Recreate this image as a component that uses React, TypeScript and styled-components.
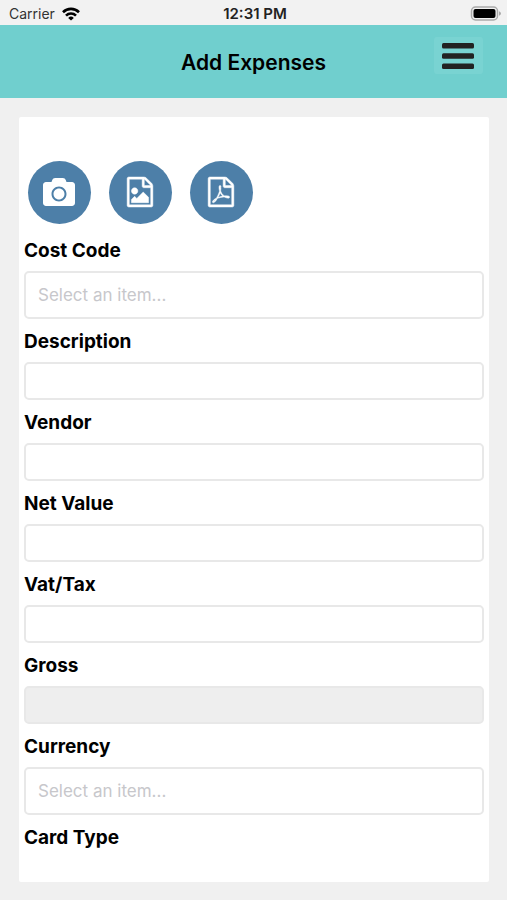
import React from "react";
import styled, { createGlobalStyle } from "styled-components";
import { FaCamera } from "react-icons/fa";

const GlobalStyle = createGlobalStyle`
  * { box-sizing: border-box; }
  body {
    margin: 0;
    background: #f0f0f0;
    color: #000;
    font-family: Inter, "Liberation Sans", sans-serif;
  }
`;

const StatusBar = styled.div`
  display: grid;
  grid-template-columns: 1fr auto 1fr;
  align-items: center;
  height: 25px;
  padding: 2px 6px 0 9px;
  background: #f2f2f2;
  color: #222;
  font-size: 14px;
`;

const Carrier = styled.div`
  display: flex;
  align-items: center;
  gap: 7px;
  color: #333;
`;

const Clock = styled.time`
  font-size: 15px;
  font-weight: 600;
`;

const Battery = styled.svg`
  justify-self: end;
`;

const Header = styled.header`
  display: grid;
  grid-template-columns: 1fr auto 1fr;
  align-items: start;
  height: 73px;
  padding: 12px 24px;
  background: #70cfce;
`;

const Title = styled.h1`
  grid-column: 2;
  margin: 0;
  font-size: 21px;
  line-height: 52px;
  font-weight: 600;
`;

const MenuButton = styled.button`
  display: flex;
  justify-content: center;
  align-items: center;
  justify-self: end;
  width: 49px;
  height: 37px;
  padding: 0 2px 0 0;
  border: 0;
  border-radius: 3px;
  background: #79d3d2;
`;

const Card = styled.main`
  margin: 19px 18px 18px 19px;
  padding: 44px 5px 24px;
  background: #fff;
  border-radius: 2px;
`;

const Actions = styled.div`
  display: flex;
  gap: 18px;
  padding: 0 4px 4px;
`;

const RoundButton = styled.button`
  display: flex;
  align-items: center;
  justify-content: center;
  width: 63px;
  height: 63px;
  padding: 0 2px 2px 0;
  border: 0;
  border-radius: 50%;
  background: #4d7fa8;
  color: #fff;
`;

const Label = styled.label`
  display: block;
  padding-top: 2px;
  font-size: 19px;
  line-height: 41px;
  font-weight: 700;
`;

const TextInput = styled.input`
  display: block;
  width: 100%;
  height: 38px;
  padding: 0 12px;
  border: 2px solid #e8e8e8;
  border-radius: 5px;
  background: #fff;
  font: inherit;
  font-size: 17px;

  &:disabled {
    background: #eee;
  }
`;

const Select = styled.select`
  display: block;
  appearance: none;
  width: 100%;
  height: 48px;
  padding: 0 12px;
  border: 2px solid #e8e8e8;
  border-radius: 5px;
  background: #fff;
  color: #c7c7cb;
  font: inherit;
  font-size: 17px;
`;

const FILE_FRAME =
  "M1468 380q28 28 48 76t20 88v1152q0 40-28 68t-68 28h-1344q-40 0-68-28t-28-68v-1600q0-40 28-68t68-28h896q40 0 88 20t76 48zm-444-244v376h376q-10-29-22-41l-313-313q-12-12-41-22zm384 1528v-1024h-416q-40 0-68-28t-28-68v-416h-768v1536h1280z";
const IMAGE_MARK =
  "m-128-448v320h-1024v-192l192-192 128 128 384-384zm-832-192q-80 0-136-56t-56-136 56-136 136-56 136 56 56 136-56 136-136 56z";
const PDF_MARK =
  "m-514-593q33 26 84 56 59-7 117-7 147 0 177 49 16 22 2 52 0 1-1 2l-2 2v1q-6 38-71 38-48 0-115-20t-130-53q-221 24-392 83-153 262-242 262-15 0-28-7l-24-12q-1-1-6-5-10-10-6-36 9-40 56-91.5t132-96.5q14-9 23 6 2 2 2 4 52-85 107-197 68-136 104-262-24-82-30.5-159.5t6.5-127.5q11-40 42-40h22q23 0 35 15 18 21 9 68-2 6-4 8 1 3 1 8v30q-2 123-14 192 55 164 146 238zm-576 411q52-24 137-158-51 40-87.5 84t-49.5 74zm398-920q-15 42-2 132 1-7 7-44 0-3 7-43 1-4 4-8-1-1-1-2t-1-2-1-2q-1-22-13-36 0 1-1 2v2zm-124 661q135-54 284-81-2-1-13-9.5t-16-13.5q-76-67-127-176-27 86-83 197-30 56-45 83zm646-16q-24-24-140-24 76 28 124 28 14 0 18-1 0-1-2-3z";

function FileIcon({ mark }: { mark: string }) {
  return (
    <svg
      width="26"
      height="30"
      viewBox="0 0 1536 1792"
      fill="currentColor"
      stroke="currentColor"
      strokeWidth="28"
      overflow="visible"
      aria-hidden="true"
    >
      <path d={FILE_FRAME + mark} />
    </svg>
  );
}

type FieldSpec = { id: string; label: string; kind: "text" | "select" | "disabled" };

const fields: FieldSpec[] = [
  { id: "cost-code", label: "Cost Code", kind: "select" },
  { id: "description", label: "Description", kind: "text" },
  { id: "vendor", label: "Vendor", kind: "text" },
  { id: "net-value", label: "Net Value", kind: "text" },
  { id: "vat", label: "Vat/Tax", kind: "text" },
  { id: "gross", label: "Gross", kind: "disabled" },
  { id: "currency", label: "Currency", kind: "select" },
];

function Field({ id, label, kind }: FieldSpec) {
  return (
    <div>
      <Label htmlFor={id}>{label}</Label>
      {kind === "select" ? (
        <Select id={id} defaultValue="">
          <option value="">Select an item...</option>
        </Select>
      ) : (
        <TextInput id={id} type="text" disabled={kind === "disabled"} />
      )}
    </div>
  );
}

export default function App() {
  return (
    <>
      <GlobalStyle />
      <StatusBar>
        <Carrier>
          Carrier
          <svg width="18" height="14" viewBox="0 0 18 14" fill="none" stroke="#000" strokeWidth="2.6" aria-hidden="true">
            <path d="M1 5.2a11.4 11.4 0 0 1 16 0" />
            <path d="M4 8.6a7 7 0 0 1 10 0" />
            <path d="M9 13.6 6.2 10.9a4 4 0 0 1 5.6 0Z" fill="#000" stroke="none" />
          </svg>
        </Carrier>
        <Clock>12:31 PM</Clock>
        <Battery width="31" height="15" viewBox="0 0 31 15" aria-hidden="true">
          <rect x="1.5" y="1" width="26" height="13" rx="4" fill="#f2f2f2" stroke="#aaa" strokeWidth="1.5" />
          <rect x="3.5" y="3" width="22" height="9" rx="2" fill="#000" />
          <path d="M29 5.2q2 .8 2 2.3t-2 2.3Z" fill="#aaa" />
        </Battery>
      </StatusBar>
      <Header>
        <Title>Add Expenses</Title>
        <MenuButton type="button" aria-label="Menu">
          <svg width="32" height="28" viewBox="0 0 32 28" fill="#222" aria-hidden="true">
            <rect y="1" width="32" height="5.5" rx="1.5" />
            <rect y="11.3" width="32" height="5.5" rx="1.5" />
            <rect y="21.6" width="32" height="5.5" rx="1.5" />
          </svg>
        </MenuButton>
      </Header>
      <Card>
        <Actions>
          <RoundButton type="button" aria-label="Take photo">
            <FaCamera size={32} />
          </RoundButton>
          <RoundButton type="button" aria-label="Attach image">
            <FileIcon mark={IMAGE_MARK} />
          </RoundButton>
          <RoundButton type="button" aria-label="Attach PDF">
            <FileIcon mark={PDF_MARK} />
          </RoundButton>
        </Actions>
        {fields.map((f) => (
          <Field key={f.id} {...f} />
        ))}
        <Label as="div">Card Type</Label>
      </Card>
    </>
  );
}
